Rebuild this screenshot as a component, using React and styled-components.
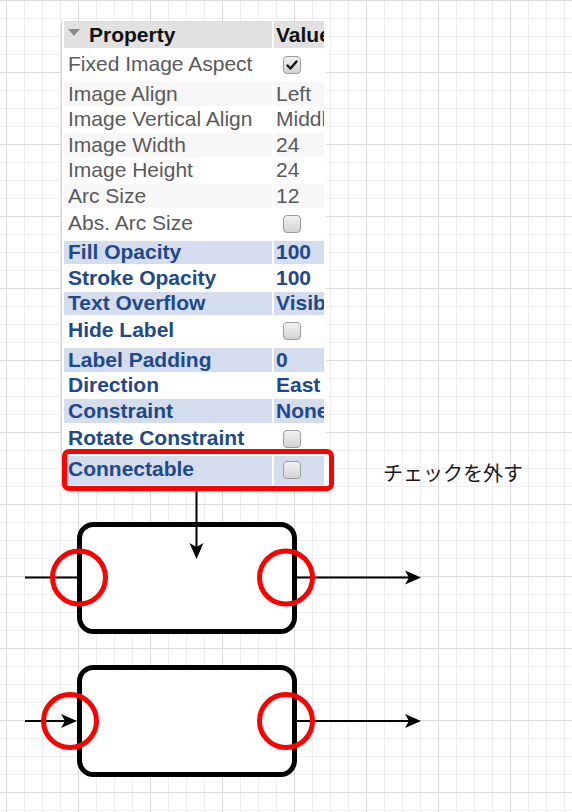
import React from 'react';
import styled, { createGlobalStyle } from 'styled-components';

const GlobalStyle = createGlobalStyle`
  html, body {
    margin: 0;
    padding: 0;
  }
  body {
    width: 572px;
    height: 812px;
    overflow: hidden;
    background-color: #ffffff;
    background-image:
      linear-gradient(to right, #d9d9d9 1px, transparent 1px),
      linear-gradient(to bottom, #d9d9d9 1px, transparent 1px),
      linear-gradient(to right, #efefef 1px, transparent 1px),
      linear-gradient(to bottom, #efefef 1px, transparent 1px);
    background-size: 72px 72px, 72px 72px, 18px 18px, 18px 18px;
    background-position: 6px 0, 6px 0, 6px 0, 6px 0;
  }
`;

const Canvas = styled.div`
  position: relative;
  width: 572px;
  height: 812px;
`;

const Top = styled.div`
  display: flex;
  align-items: flex-start;
  height: 486px;
  padding-top: 21px;
  box-sizing: border-box;
`;

const Panel = styled.div`
  margin-left: 61px;
  border-left: 1px solid #d4d4d4;
  background: #ffffff;
  width: 264px;
  overflow: hidden;
`;

const Table = styled.table`
  border-collapse: separate;
  border-spacing: 2px;
  table-layout: fixed;
  width: 264px;
  margin: -2px 0 0 0;
  font-family: "Liberation Sans", Arial, sans-serif;
  font-size: 21px;
`;

const HeadCell = styled.th`
  background: #e1e1e1;
  height: 27px;
  padding: 0 0 0 ${p => (p.$first ? 4 : 2)}px;
  text-align: left;
  font-weight: 700;
  color: #111;
  white-space: nowrap;
  overflow: hidden;
  line-height: 27px;
`;

const Triangle = styled.span`
  display: inline-block;
  width: 0;
  height: 0;
  border-left: 6px solid transparent;
  border-right: 6px solid transparent;
  border-top: 7px solid #8a8a8a;
  margin: 0 9px 0 0;
  vertical-align: 6px;
`;

const Cell = styled.td`
  box-sizing: border-box;
  height: ${p => p.$h}px;
  padding: 0 0 ${p => (p.$h > 25 ? 3 : 0)}px ${p => (p.$first ? 4 : 2)}px;
  line-height: 22px;
  white-space: nowrap;
  overflow: hidden;
  background: ${p => (p.$bold ? (p.$stripe ? '#d3ddee' : '#ffffff') : p.$stripe ? '#f7f7f7' : '#ffffff')};
  color: ${p => (p.$bold ? '#21498a' : '#5a5a5a')};
  font-weight: ${p => (p.$bold ? 700 : 400)};
`;

const Check = styled.span`
  display: inline-block;
  box-sizing: border-box;
  width: 18px;
  height: 18px;
  margin-left: 7px;
  vertical-align: middle;
  border: 1px solid #9c9c9c;
  border-radius: 4px;
  background: linear-gradient(#f2f2f2, #d2d2d2);
  position: relative;
  svg {
    position: absolute;
    left: 2px;
    top: 2px;
  }
`;

const Highlight = styled.div`
  position: absolute;
  left: 62px;
  top: 449px;
  width: 272px;
  height: 42px;
  box-sizing: border-box;
  border: 5px solid #ff0000;
  border-radius: 7px;
`;

const Note = styled.div`
  position: absolute;
  left: 383px;
  top: 459px;
  font-family: "Noto Sans CJK JP", "Noto Sans", sans-serif;
  font-size: 20px;
  line-height: 28px;
  color: #1a1a1a;
`;

const Diagram = styled.svg`
  display: block;
`;

const rows = [
  { name: 'Fixed Image Aspect', check: true, checked: true, h: 30 },
  { name: 'Image Align', value: 'Left' },
  { name: 'Image Vertical Align', value: 'Middle' },
  { name: 'Image Width', value: '24' },
  { name: 'Image Height', value: '24' },
  { name: 'Arc Size', value: '12' },
  { name: 'Abs. Arc Size', check: true },
  { name: 'Fill Opacity', value: '100', bold: true },
  { name: 'Stroke Opacity', value: '100', bold: true },
  { name: 'Text Overflow', value: 'Visible', bold: true },
  { name: 'Hide Label', check: true, bold: true },
  { name: 'Label Padding', value: '0', bold: true },
  { name: 'Direction', value: 'East', bold: true },
  { name: 'Constraint', value: 'None', bold: true },
  { name: 'Rotate Constraint', check: true, bold: true },
  { name: 'Connectable', check: true, bold: true },
];

function Checkbox({ checked }) {
  return (
    <Check>
      {checked && (
        <svg width="12" height="12" viewBox="0 0 12 12">
          <path d="M1.5 6.5 L4.5 9.5 L10.5 2.5" fill="none" stroke="#111" strokeWidth="2.4" strokeLinecap="round" strokeLinejoin="round" />
        </svg>
      )}
    </Check>
  );
}

// y in page coords minus 486
const Y = y => y - 486;

function Arrow({ x1, y1, x2, y2 }) {
  const horizontal = y1 === y2;
  let head;
  if (horizontal) {
    head = `${x2},${y2} ${x2 - 16},${y2 - 7} ${x2 - 12},${y2} ${x2 - 16},${y2 + 7}`;
  } else {
    head = `${x2},${y2} ${x2 - 7},${y2 - 16} ${x2},${y2 - 12} ${x2 + 7},${y2 - 16}`;
  }
  return (
    <g>
      <line x1={x1} y1={y1} x2={horizontal ? x2 - 12 : x2} y2={horizontal ? y2 : y2 - 12} stroke="#000" strokeWidth="2" />
      <polygon points={head} fill="#000" />
    </g>
  );
}

export default function App() {
  return (
    <>
      <GlobalStyle />
      <Canvas>
        <Top>
          <Panel>
            <Table>
              <colgroup>
                <col style={{ width: 208 }} />
                <col style={{ width: 50 }} />
              </colgroup>
              <thead>
                <tr>
                  <HeadCell $first>
                    <Triangle />
                    Property
                  </HeadCell>
                  <HeadCell>Value</HeadCell>
                </tr>
              </thead>
              <tbody>
                {rows.map((r, i) => {
                  const stripe = i % 2 === 1;
                  const h = r.h || (r.check ? 29 : 23.5);
                  return (
                    <tr key={r.name}>
                      <Cell $first $h={h} $bold={r.bold} $stripe={stripe}>
                        {r.name}
                      </Cell>
                      <Cell $h={h} $bold={r.bold} $stripe={stripe}>
                        {r.check ? <Checkbox checked={r.checked} /> : r.value}
                      </Cell>
                    </tr>
                  );
                })}
              </tbody>
            </Table>
          </Panel>
        </Top>
        <Highlight />
        <Note>チェックを外す</Note>
        <Diagram width="572" height="326" viewBox="0 0 572 326">
          {/* upper shape */}
          <line x1="25" y1={Y(577.5)} x2="80" y2={Y(577.5)} stroke="#000" strokeWidth="2" />
          <rect x="79.5" y={Y(524.5)} width="215" height="107" rx="14" fill="#fff" stroke="#000" strokeWidth="5" />
          <Arrow x1={196.5} y1={Y(491)} x2={196.5} y2={Y(559)} />
          <Arrow x1={297} y1={Y(577.5)} x2={421} y2={Y(577.5)} />
          <circle cx="79" cy={Y(577.5)} r="26.5" fill="none" stroke="#ff0000" strokeWidth="5" />
          <circle cx="286" cy={Y(577.5)} r="26.5" fill="none" stroke="#ff0000" strokeWidth="5" />

          {/* lower shape */}
          <rect x="79.5" y={Y(667.5)} width="215" height="107" rx="14" fill="#fff" stroke="#000" strokeWidth="5" />
          <Arrow x1={25} y1={Y(721)} x2={77} y2={Y(721)} />
          <Arrow x1={297} y1={Y(721)} x2={421} y2={Y(721)} />
          <circle cx="70" cy={Y(721)} r="26.5" fill="none" stroke="#ff0000" strokeWidth="5" />
          <circle cx="286" cy={Y(721)} r="26.5" fill="none" stroke="#ff0000" strokeWidth="5" />
        </Diagram>
      </Canvas>
    </>
  );
}
